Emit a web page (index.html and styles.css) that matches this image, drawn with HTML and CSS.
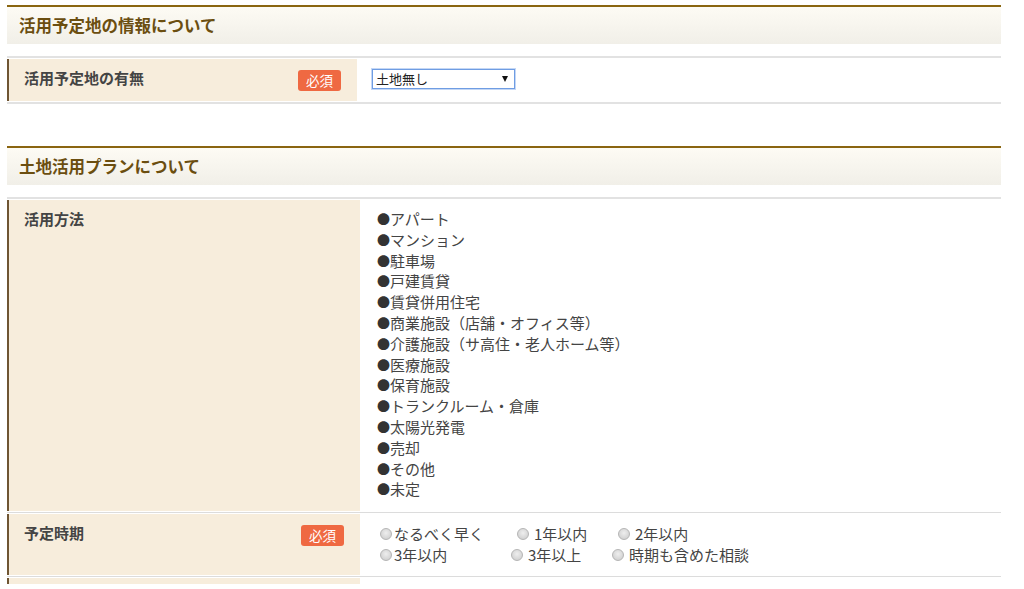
FILE: index.html
```html
<!DOCTYPE html>
<html lang="ja">
<head>
<meta charset="utf-8">
<title>フォーム</title>
<link rel="stylesheet" href="styles.css">
</head>
<body>
<div class="page">
  <section class="section">
    <h2 class="sec-head">活用予定地の情報について</h2>
    <div class="table t1">
      <div class="row">
        <div class="label"><span class="label-text">活用予定地の有無</span><span class="badge">必須</span></div>
        <div class="value">
          <div class="select-wrap">
            <select class="select"><option>土地無し</option></select>
          </div>
        </div>
      </div>
    </div>
  </section>

  <section class="section sec2">
    <h2 class="sec-head">土地活用プランについて</h2>
    <div class="table t2">
      <div class="row">
        <div class="label"><span class="label-text">活用方法</span></div>
        <div class="value list-cell">
          <ul class="list">
            <li><span class="dot">●</span>アパート</li>
            <li><span class="dot">●</span>マンション</li>
            <li><span class="dot">●</span>駐車場</li>
            <li><span class="dot">●</span>戸建賃貸</li>
            <li><span class="dot">●</span>賃貸併用住宅</li>
            <li><span class="dot">●</span>商業施設（店舗・オフィス等）</li>
            <li><span class="dot">●</span>介護施設（サ高住・老人ホーム等）</li>
            <li><span class="dot">●</span>医療施設</li>
            <li><span class="dot">●</span>保育施設</li>
            <li><span class="dot">●</span>トランクルーム・倉庫</li>
            <li><span class="dot">●</span>太陽光発電</li>
            <li><span class="dot">●</span>売却</li>
            <li><span class="dot">●</span>その他</li>
            <li><span class="dot">●</span>未定</li>
          </ul>
        </div>
      </div>
      <div class="row">
        <div class="label"><span class="label-text">予定時期</span><span class="badge">必須</span></div>
        <div class="value radio-cell">
          <div class="radio-line">
            <label class="opt o137"><span class="radio"></span>なるべく早く</label>
            <label class="opt o101"><span class="radio"></span><span class="sp">1年以内</span></label>
            <label class="opt"><span class="radio"></span><span class="sp">2年以内</span></label>
          </div>
          <div class="radio-line">
            <label class="opt o131"><span class="radio"></span>3年以内</label>
            <label class="opt o101"><span class="radio"></span><span class="sp">3年以上</span></label>
            <label class="opt"><span class="radio"></span><span class="sp">時期も含めた相談</span></label>
          </div>
        </div>
      </div>
      <div class="row last">
        <div class="label"></div>
        <div class="value"></div>
      </div>
    </div>
  </section>
</div>
</body>
</html>
```

FILE: styles.css
```css
html { overflow: hidden; }
body {
  margin: 0;
  background: #fff;
  font-family: "Noto Sans CJK JP", "Noto Sans", sans-serif;
  color: #444;
}
.page {
  width: 994px;
  padding: 5px 0 0 7px;
}
.section { margin: 0; }
.sec2 { margin-top: 42px; }
.sec-head {
  margin: 0;
  height: 37px;
  border-top: 2px solid #8a6510;
  background: linear-gradient(#fdfbf4, #f1efe8);
  padding-left: 12px;
  font-size: 16.5px;
  font-weight: bold;
  line-height: 37px;
  color: #6b4e10;
}
.table {
  margin-top: 12px;
  border-top: 2px solid #e2e2e2;
}
.row {
  display: flex;
  border-bottom: 1px solid #dcdcdc;
}
.t1 .row { border-bottom: 2px solid #e2e2e2; }
.label {
  width: 317px;
  flex: none;
  display: flex;
  justify-content: space-between;
  align-items: flex-start;
  background: #f7eddc;
  border-left: 2px solid #6f5533;
  padding: 8px 16px 0 15px;
  margin: 1px 0;
}
.t2 .label { width: 320px; }
.label-text {
  font-size: 15px;
  font-weight: bold;
  line-height: 21px;
  color: #444;
}
.badge {
  margin-top: 3px;
  width: 43px;
  height: 21px;
  border-radius: 3px;
  background: #ef6942;
  color: #fff;
  font-size: 13.5px;
  line-height: 21px;
  text-align: center;
}
.value {
  flex: 1;
  padding: 11px 0 0 15px;
  height: 33px;
}
.select-wrap {
  position: relative;
  width: 143px;
}
.select {
  appearance: none;
  -webkit-appearance: none;
  display: block;
  width: 143px;
  height: 20px;
  margin: 0;
  padding: 0 0 0 3px;
  border: 1px solid #6f9de3;
  box-shadow: 0 0 0 1px #c4d7f5;
  border-radius: 0;
  background: #fff;
  font-family: "Noto Sans CJK JP", sans-serif;
  font-size: 13px;
  line-height: 18px;
  color: #222;
  outline: none;
}
.select-wrap::after {
  content: "";
  position: absolute;
  right: 7px;
  top: 7px;
  border-left: 3.5px solid transparent;
  border-right: 3.5px solid transparent;
  border-top: 6px solid #111;
}
.list-cell {
  height: auto;
  padding: 10px 0 12px 17px;
}
.list {
  list-style: none;
  margin: 0;
  padding: 0;
  font-size: 15px;
  line-height: 20.8px;
  color: #444;
}
.list li {
  height: 20.8px;
  white-space: nowrap;
}
.dot {
  display: inline-block;
  width: 13px;
  font-size: 13px;
  line-height: 1;
  vertical-align: 1px;
  color: #333;
}
.radio-cell {
  height: auto;
  padding: 10px 0 11px 20px;
}
.radio-line {
  display: flex;
  font-size: 15px;
  line-height: 21px;
  color: #444;
}
.opt {
  display: flex;
  align-items: center;
}
.o137 { width: 137px; }
.o131 { width: 131px; }
.o101 { width: 101px; }
.radio {
  width: 10px;
  height: 10px;
  border-radius: 50%;
  border: 1px solid #b5b5b5;
  background: radial-gradient(circle at 50% 40%, #eeeeee, #c9c9c9);
  margin-right: 2px;
}
.sp { margin-left: 3px; }
.row.last { border-bottom: none; }
.row.last .label { height: 6px; padding-top: 0; margin-bottom: 0; }
.row.last .value { height: 6px; padding: 0; }
```
